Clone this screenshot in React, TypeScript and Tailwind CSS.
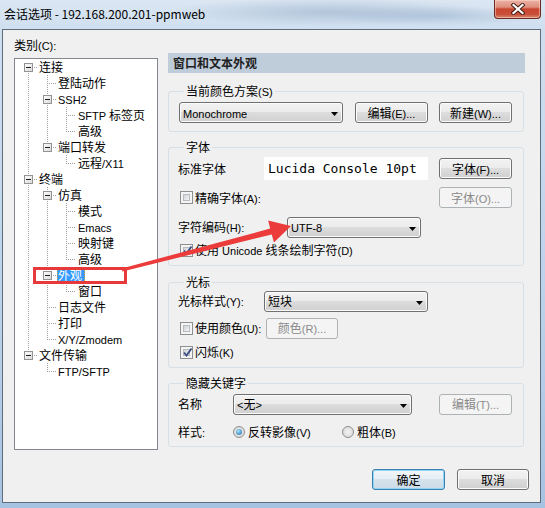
import React from "react";

const FONT = "font-['Noto_Sans_CJK_SC','Noto_Sans',sans-serif]";
const LATIN =
  "font-['Liberation_Sans','Noto_Sans_CJK_SC',sans-serif] text-[11px] leading-[11px]";

const CJK_RE = /([\u2e80-\u9fff\uff00-\uffef\u3000-\u303f]+)/;

function T({ s }: { s: string }) {
  const parts = s.split(CJK_RE);
  return (
    <>
      {parts.map((p, i) =>
        p === "" ? null : CJK_RE.test(p) ? (
          <span key={i}>{p}</span>
        ) : (
          <span key={i} className={LATIN}>
            {p}
          </span>
        )
      )}
    </>
  );
}

type Row = { t: string; l: 0 | 1 | 2; box?: boolean; sel?: boolean };

const rows: Row[] = [
  { t: "连接", l: 0, box: true },
  { t: "登陆动作", l: 1 },
  { t: "SSH2", l: 1, box: true },
  { t: "SFTP 标签页", l: 2 },
  { t: "高级", l: 2 },
  { t: "端口转发", l: 1, box: true },
  { t: "远程/X11", l: 2 },
  { t: "终端", l: 0, box: true },
  { t: "仿真", l: 1, box: true },
  { t: "模式", l: 2 },
  { t: "Emacs", l: 2 },
  { t: "映射键", l: 2 },
  { t: "高级", l: 2 },
  { t: "外观", l: 1, box: true, sel: true },
  { t: "窗口", l: 2 },
  { t: "日志文件", l: 1 },
  { t: "打印", l: 1 },
  { t: "X/Y/Zmodem", l: 1 },
  { t: "文件传输", l: 0, box: true },
  { t: "FTP/SFTP", l: 1 },
];

const padByLevel: Record<number, string> = {
  0: "pl-[24px]",
  1: "pl-[43px]",
  2: "pl-[63px]",
};

const LX = [13, 32, 51];
const TX = [24, 43, 63];

// vertical connector segments: [level, fromRow, toRow]
const vsegs: [number, number, number][] = [
  [0, 0, 18],
  [1, 1, 5],
  [1, 8, 17],
  [1, 19, 19],
  [2, 3, 4],
  [2, 6, 6],
  [2, 9, 12],
  [2, 14, 14],
];

function TreeLines() {
  const c = (i: number) => i * 16 + 8;
  return (
    <svg
      className="absolute left-0 top-0 pointer-events-none"
      width="142"
      height="390"
      shapeRendering="crispEdges"
    >
      <defs>
        <linearGradient id="tb" x1="0" y1="0" x2="1" y2="1">
          <stop offset="0" stopColor="#ffffff" />
          <stop offset="1" stopColor="#d9d9d9" />
        </linearGradient>
      </defs>
      {vsegs.map(([l, a, b], k) => (
        <line
          key={"v" + k}
          x1={LX[l] + 0.5}
          x2={LX[l] + 0.5}
          y1={l === 0 ? c(a) : a * 16}
          y2={c(b) + 1}
          stroke="#a0a0a0"
          strokeDasharray="1 1"
        />
      ))}
      {rows.map((r, i) => (
        <line
          key={"h" + i}
          x1={LX[r.l]}
          x2={TX[r.l] - 2}
          y1={c(i) + 0.5}
          y2={c(i) + 0.5}
          stroke="#a0a0a0"
          strokeDasharray="1 1"
        />
      ))}
      {rows.map((r, i) =>
        r.box ? (
          <g key={"b" + i}>
            <rect
              x={LX[r.l] - 4 + 0.5}
              y={c(i) - 4 + 0.5}
              width="8"
              height="8"
              fill="url(#tb)"
              stroke="#939393"
            />
            <line
              x1={LX[r.l] - 2}
              x2={LX[r.l] + 3}
              y1={c(i) + 0.5}
              y2={c(i) + 0.5}
              stroke="#1e1e1e"
            />
          </g>
        ) : null
      )}
    </svg>
  );
}

function Tree() {
  return (
    <div className="relative mt-[5px] w-[144px] h-[392px] border border-[#828790] bg-white">
      <TreeLines />
      <div className="relative flex flex-col">
        {rows.map((r, i) => (
          <div
            key={i}
            className={`h-[16px] flex items-center whitespace-nowrap ${
              r.sel ? "pl-[42px]" : padByLevel[r.l]
            }`}
          >
            {r.sel ? (
              <span className="h-[15px] flex items-center pl-[1px] pr-[3px] bg-[#3399ff] text-white outline outline-1 outline-dotted outline-[#d8a040] -outline-offset-1">
                {r.t}
              </span>
            ) : (
              <span className="text-black">
                <T s={r.t} />
              </span>
            )}
          </div>
        ))}
      </div>
    </div>
  );
}

const BTN_NORMAL =
  "border-[#707070] bg-[linear-gradient(to_bottom,#f2f2f2_0%,#ebebeb_49%,#dddddd_50%,#cfcfcf_100%)] shadow-[inset_0_0_0_1px_#fbfbfb] text-black";
const BTN_DISABLED = "border-[#adb2b5] bg-[#f4f4f4] text-[#8a8a8a]";
const BTN_PRIMARY =
  "border-[#3c7fb1] bg-[linear-gradient(to_bottom,#f1f6f9_0%,#e6eef4_49%,#d6e3ec_50%,#cbdbe7_100%)] shadow-[inset_0_0_0_1px_#8fd6f4] text-black";

function Btn({
  w,
  label,
  kind = "normal",
  extra = "",
}: {
  w: string;
  label: string;
  kind?: "normal" | "disabled" | "primary";
  extra?: string;
}) {
  const k =
    kind === "disabled" ? BTN_DISABLED : kind === "primary" ? BTN_PRIMARY : BTN_NORMAL;
  return (
    <div
      className={`${w} ${extra} h-[21px] shrink-0 rounded-[3px] border flex items-center justify-center whitespace-nowrap ${k}`}
    >
      <span>
        <T s={label} />
      </span>
    </div>
  );
}

function Combo({ w, text }: { w: string; text: string }) {
  return (
    <div
      className={`${w} h-[21px] shrink-0 rounded-[3px] border flex items-center pl-[3px] pr-[4px] ${BTN_NORMAL}`}
    >
      <span className="flex-1 whitespace-nowrap">
        <T s={text} />
      </span>
      <svg width="7" height="4" className="mt-[3px]">
        <path d="M0 0H7L3.5 4Z" fill="#000" />
      </svg>
    </div>
  );
}

function Check({ checked }: { checked?: boolean }) {
  return (
    <span className="relative w-[13px] h-[13px] shrink-0 border border-[#8e8f8f] bg-[#f4f4f4] p-[2px] flex">
      <span className="flex-1 border border-[#b7bcc2] bg-[linear-gradient(135deg,#cdd1d6,#f5f5f6)]" />
      {checked ? (
        <svg className="absolute left-[1px] top-[0px]" width="11" height="11">
          <path
            d="M2 5.5 L4.5 8.5 L9.5 1.5"
            fill="none"
            stroke="#3c4f83"
            strokeWidth="1.9"
          />
        </svg>
      ) : null}
    </span>
  );
}

function Radio({ checked }: { checked?: boolean }) {
  return (
    <span className="w-[12px] h-[12px] shrink-0 rounded-full border border-[#8e8f8f] bg-[radial-gradient(circle_at_50%_50%,#f2f2f2,#d4d4d4)] flex items-center justify-center">
      {checked ? (
        <span className="w-[6px] h-[6px] rounded-full bg-[radial-gradient(circle_at_40%_35%,#a6e6ff,#1b63a8)]" />
      ) : null}
    </span>
  );
}

function Group({
  title,
  children,
  extra,
}: {
  title: string;
  children: React.ReactNode;
  extra: string;
}) {
  return (
    <fieldset
      className={`w-[356px] rounded-[3px] border border-[#d5dfe5] pl-[9px] pr-[11px] ${extra}`}
    >
      <legend className="ml-[6px] px-[2px] h-[16px] leading-[16px]">
        <T s={title} />
      </legend>
      {children}
    </fieldset>
  );
}

export default function App() {
  return (
    <div
      className={`relative w-[545px] h-[508px] overflow-hidden ${FONT} text-[12px] leading-[16px] text-black bg-[radial-gradient(ellipse_160px_14px_at_330px_12px,rgba(110,140,175,0.35),transparent),radial-gradient(ellipse_110px_10px_at_440px_16px,rgba(120,150,185,0.3),transparent),linear-gradient(to_bottom,#dbe6f2_0%,#cfdff0_6%,#bcd2ea_60%,#a7c3e2_100%)]`}
    >
      {/* title bar */}
      <div className="h-[29px] flex items-start">
        <div className="pl-[4px] pt-[6px] text-[12px] leading-[16px] text-black whitespace-nowrap">
          会话选项 - 192.168.200.201-ppmweb
        </div>
        <div className="ml-auto mr-[4px] w-[47px] h-[19px] rounded-b-[4px] border border-t-0 border-[#6b2a22] bg-[linear-gradient(to_bottom,#eab3a6_0%,#df8d7c_40%,#c8462f_50%,#c9503a_80%,#dd8a70_100%)] shadow-[inset_0_0_0_1px_rgba(255,220,210,0.5)] flex items-center justify-center">
          <svg width="14" height="12" viewBox="0 0 14 12">
            <path d="M2.5 2 L11.5 10 M11.5 2 L2.5 10" stroke="#3d1a14" strokeWidth="4" strokeLinecap="square" />
            <path d="M2.5 2 L11.5 10 M11.5 2 L2.5 10" stroke="#ffffff" strokeWidth="2.2" strokeLinecap="square" />
          </svg>
        </div>
      </div>

      {/* client area */}
      <div className="ml-[2px] w-[539px] h-[474px] border border-[#5f6c7a] bg-[#f0f0f0] flex flex-col">
        <div className="flex">
          {/* left column */}
          <div className="pl-[11px] pt-[7px] flex flex-col">
            <div className="h-[16px]">
              <T s="类别(C):" />
            </div>
            <Tree />
          </div>

          {/* right column */}
          <div className="ml-[10px] pt-[23px] w-[357px] flex flex-col">
            <div className="h-[20px] bg-[#bfcddb] pl-[5px] flex items-center font-bold text-[#1f1f1f]">
              窗口和文本外观
            </div>

            <Group title="当前颜色方案(S)" extra="mt-[10px] pb-[8px]">
              <div className="mt-[3px] flex items-center">
                <div className="ml-[1px]">
                  <Combo w="w-[164px]" text="Monochrome" />
                </div>
                <Btn w="w-[73px]" extra="ml-[12px]" label="编辑(E)..." />
                <Btn w="w-[73px]" extra="ml-auto" label="新建(W)..." />
              </div>
            </Group>

            <Group title="字体" extra="mt-[7px] pb-[7px]">
              <div className="mt-[2px] h-[23px] flex items-center">
                <span className="w-[86px] shrink-0">标准字体</span>
                <div className="w-[164px] h-[23px] bg-white pl-[4px] flex items-center font-['DejaVu_Sans_Mono',monospace] text-[13px] whitespace-nowrap">
                  Lucida Console 10pt
                </div>
                <Btn w="w-[73px]" extra="ml-auto" label="字体(F)..." />
              </div>
              <div className="mt-[7px] h-[21px] flex items-center">
                <span className="ml-[2px] mr-[2px] flex">
                  <Check />
                </span>
                <span>
                  <T s="精确字体(A):" />
                </span>
                <Btn w="w-[73px]" kind="disabled" extra="ml-auto" label="字体(O)..." />
              </div>
              <div className="mt-[9px] h-[20px] flex items-center">
                <span className="w-[109px] shrink-0">
                  <T s="字符编码(H):" />
                </span>
                <Combo w="w-[134px]" text="UTF-8" />
              </div>
              <div className="mt-[5px] h-[16px] flex items-center">
                <span className="ml-[2px] mr-[2px] flex">
                  <Check checked />
                </span>
                <span className="whitespace-pre">
                  <T s="使用 Unicode 线条绘制字符(D)" />
                </span>
              </div>
            </Group>

            <Group title="光标" extra="mt-[8px] pb-[7px]">
              <div className="mt-[1px] h-[20px] flex items-center">
                <span className="w-[86px] shrink-0">
                  <T s="光标样式(Y):" />
                </span>
                <Combo w="w-[164px]" text="短块" />
              </div>
              <div className="mt-[7px] h-[20px] flex items-center">
                <span className="w-[88px] shrink-0 flex items-center">
                  <span className="ml-[2px] mr-[2px] flex">
                    <Check />
                  </span>
                  <span>
                    <T s="使用颜色(U):" />
                  </span>
                </span>
                <Btn w="w-[72px]" kind="disabled" label="颜色(R)..." />
              </div>
              <div className="mt-[6px] h-[16px] flex items-center">
                <span className="ml-[2px] mr-[2px] flex">
                  <Check checked />
                </span>
                <span>
                  <T s="闪烁(K)" />
                </span>
              </div>
            </Group>

            <Group title="隐藏关键字" extra="mt-[7px] pb-[6px]">
              <div className="mt-[3px] h-[20px] flex items-center">
                <span className="w-[55px] shrink-0">名称</span>
                <Combo w="w-[179px]" text="<无>" />
                <Btn w="w-[73px]" kind="disabled" extra="ml-auto" label="编辑(T)..." />
              </div>
              <div className="mt-[10px] h-[16px] flex items-center">
                <span className="w-[55px] shrink-0">
                  <T s="样式:" />
                </span>
                <span className="w-[109px] shrink-0 flex items-center">
                  <Radio checked />
                  <span className="ml-[3px]">
                    <T s="反转影像(V)" />
                  </span>
                </span>
                <span className="flex items-center">
                  <Radio />
                  <span className="ml-[3px]">
                    <T s="粗体(B)" />
                  </span>
                </span>
              </div>
            </Group>
          </div>
        </div>

        {/* bottom buttons */}
        <div className="mt-auto flex justify-end gap-[12px] pr-[11px] pb-[12px]">
          <Btn w="w-[73px]" kind="primary" label="确定" />
          <Btn w="w-[72px]" label="取消" />
        </div>
      </div>

      {/* annotations: red box and arrow */}
      <svg
        className="absolute left-0 top-0 pointer-events-none"
        width="545"
        height="508"
      >
        <rect
          x="34.5"
          y="268.5"
          width="91"
          height="14"
          fill="none"
          stroke="#e8393a"
          strokeWidth="3"
        />
        <polygon
          points="121.6,268.5 270.2,228.6 268.1,220.4 291,226 273.9,242.6 271.8,234.4 122.4,271.5"
          fill="#ec3b3b"
        />
      </svg>
    </div>
  );
}
